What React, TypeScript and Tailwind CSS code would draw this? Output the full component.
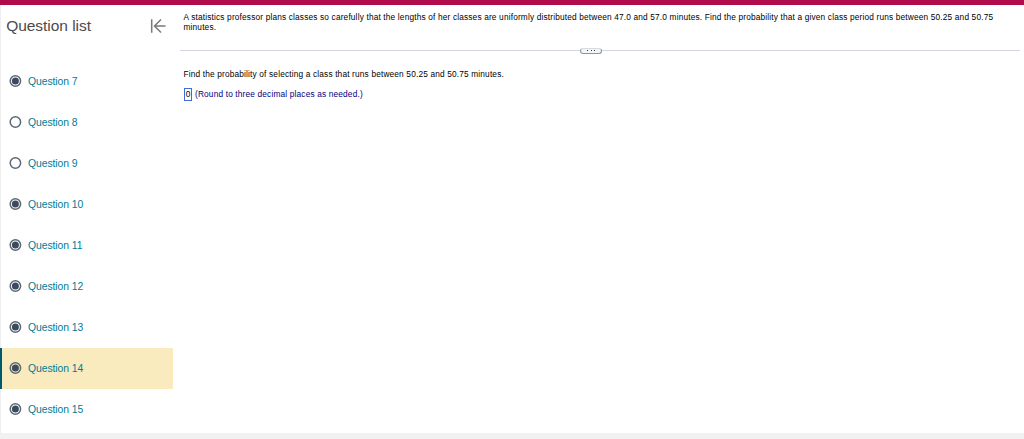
import clsx from "clsx";

const questions = [
  { id: 7, answered: true },
  { id: 8, answered: false },
  { id: 9, answered: false },
  { id: 10, answered: true },
  { id: 11, answered: true },
  { id: 12, answered: true },
  { id: 13, answered: true },
  { id: 14, answered: true },
  { id: 15, answered: true },
];

const CURRENT = 14;

function StatusIcon({ answered }: { answered: boolean }) {
  return (
    <svg width="13" height="12" viewBox="0 0 13 12" className="shrink-0">
      <circle
        cx="6.4"
        cy="6"
        r="5.2"
        fill="none"
        stroke="#5b6775"
        strokeWidth="1.5"
      />
      {answered && <circle cx="6.4" cy="6" r="3.5" fill="#3d4a5b" />}
    </svg>
  );
}

function Sidebar() {
  return (
    <aside className="w-[173px] shrink-0 flex flex-col">
      <div className="h-[55px] pl-[5.2px] pr-[7px] pb-[13px] flex items-center justify-between border-l border-[#eeeeee]">
        <h1 className="text-[15.5px] leading-none tracking-[-0.04px] text-[#4a4a4a]">
          Question list
        </h1>

        <button type="button" aria-label="Collapse question list">
          <svg
            width="16"
            height="16"
            viewBox="0 0 16 16"
            fill="none"
            stroke="#77797b"
            strokeWidth="1.5"
          >
            <path d="M1.7 1.2v13.6M15.5 8H4.7M11 1.5L4.5 8l6.5 6.5" />
          </svg>
        </button>
      </div>

      <ul className="flex flex-col">
        {questions.map(({ id, answered }) => (
          <li
            key={id}
            className={clsx(
              "h-[41.1px] flex items-center gap-1.5 text-[10.4px] tracking-[-0.07px] text-[#007c96]",
              id === CURRENT
                ? "border-l-2 border-[#005b70] bg-[#f9ebbe] pl-[7px]"
                : "border-l border-[#eeeeee] pl-2"
            )}
          >
            <StatusIcon answered={answered} />
            <a className="pt-[2px]">Question {id}</a>
          </li>
        ))}
      </ul>

      <div className="flex-1 border-l border-[#eeeeee]" />
    </aside>
  );
}

function Divider() {
  return (
    <div className="h-[7px] ml-[7px] mr-1 flex items-center">
      <div className="h-px w-[400px] bg-[#d5d5df]" />
      <div className="h-1.5 w-[22px] rounded-[3px] border border-[#8b97a5] border-t-[#d5dae0] bg-[#f3f5f7] flex items-center justify-center gap-[2.5px]">
        <span className="size-px bg-[#333333]" />
        <span className="size-px bg-[#333333]" />
        <span className="size-px bg-[#333333]" />
      </div>
      <div className="h-px flex-1 bg-[#d5d5df]" />
    </div>
  );
}

export default function App() {
  return (
    <div className="h-[439px] flex flex-col overflow-hidden bg-white font-['Liberation_Sans',Arial,sans-serif]">
      <div className="h-[5px] shrink-0 bg-[#b00b4b]" />

      <div className="h-[428px] shrink-0 flex overflow-hidden">
        <Sidebar />

        <main className="flex-1 flex flex-col text-[8.3px] leading-[10px] tracking-[0.163px] text-black">
          <p className="h-[42px] pl-[10.5px] pt-[7px] whitespace-nowrap">
            A statistics professor plans classes so carefully that the lengths
            of her classes are uniformly distributed between 47.0 and 57.0
            minutes. Find the probability that a given class period runs between
            50.25 and 50.75
            <br />
            minutes.
          </p>

          <Divider />

          <p className="pl-[10.5px] pt-[15px]">
            Find the probability of selecting a class that runs between 50.25
            and 50.75 minutes.
          </p>

          <div className="pl-[11px] pt-[9px] flex items-center gap-[3px]">
            <span className="h-[13px] w-[8px] pb-px flex items-center justify-center border border-[#3b6fd6] tracking-normal">
              0
            </span>
            <span className="pb-px text-[#000080]">
              (Round to three decimal places as needed.)
            </span>
          </div>
        </main>
      </div>

      <div className="h-1.5 shrink-0 bg-[#f1f1f1]" />
    </div>
  );
}
